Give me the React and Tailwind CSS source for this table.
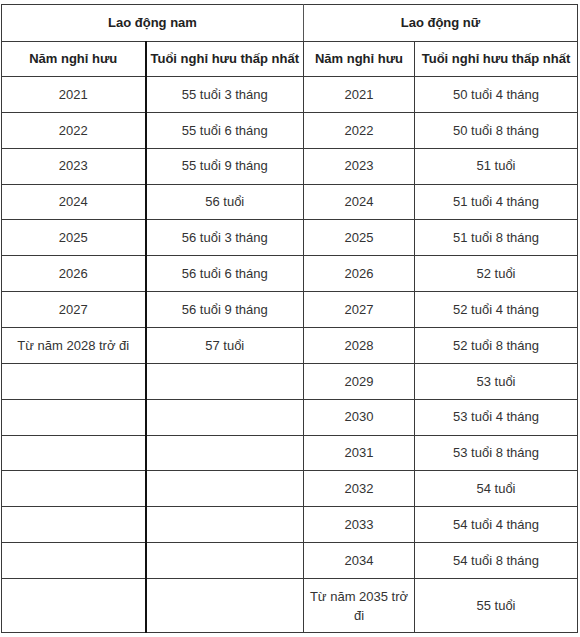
const rows = [
  ["2021", "55 tuổi 3 tháng", "2021", "50 tuổi 4 tháng"],
  ["2022", "55 tuổi 6 tháng", "2022", "50 tuổi 8 tháng"],
  ["2023", "55 tuổi 9 tháng", "2023", "51 tuổi"],
  ["2024", "56 tuổi", "2024", "51 tuổi 4 tháng"],
  ["2025", "56 tuổi 3 tháng", "2025", "51 tuổi 8 tháng"],
  ["2026", "56 tuổi 6 tháng", "2026", "52 tuổi"],
  ["2027", "56 tuổi 9 tháng", "2027", "52 tuổi 4 tháng"],
  ["Từ năm 2028 trở đi", "57 tuổi", "2028", "52 tuổi 8 tháng"],
  ["", "", "2029", "53 tuổi"],
  ["", "", "2030", "53 tuổi 4 tháng"],
  ["", "", "2031", "53 tuổi 8 tháng"],
  ["", "", "2032", "54 tuổi"],
  ["", "", "2033", "54 tuổi 4 tháng"],
  ["", "", "2034", "54 tuổi 8 tháng"],
];

const cell = "border border-[#3a3a3a] text-center align-middle px-1";

export default function App() {
  return (
    <div className="bg-white w-[580px] h-[637px] pt-[4px] pl-[1px] font-['Liberation_Sans',Arial,sans-serif] text-[13px] text-[#333]">
      <table className="table-fixed border-collapse w-[576px]">
        <colgroup>
          <col className="w-[144px]" />
          <col className="w-[158px]" />
          <col className="w-[111px]" />
          <col className="w-[163px]" />
        </colgroup>
        <thead>
          <tr className="h-[37px]">
            <th colSpan={2} className={`${cell} font-bold text-[#222] border-r-[#555]`}>
              Lao động nam
            </th>
            <th colSpan={2} className={`${cell} font-bold text-[#222]`}>
              Lao động nữ
            </th>
          </tr>
          <tr className="h-[35px]">
            <th className={`${cell} font-bold text-[#222] border-r-2 border-r-[#111]`}>Năm nghỉ hưu</th>
            <th className={`${cell} font-bold text-[#222] whitespace-nowrap px-0`}>Tuổi nghỉ hưu thấp nhất</th>
            <th className={`${cell} font-bold text-[#222]`}>Năm nghỉ hưu</th>
            <th className={`${cell} font-bold text-[#222] whitespace-nowrap px-0`}>Tuổi nghỉ hưu thấp nhất</th>
          </tr>
        </thead>
        <tbody>
          {rows.map((r, i) => (
            <tr key={i} className="h-[35.86px]">
              <td className={`${cell} border-r-2 border-r-[#111]`}>{r[0]}</td>
              <td className={cell}>{r[1]}</td>
              <td className={`${cell} border-l-[#666]`}>{r[2]}</td>
              <td className={`${cell} border-l-[#666]`}>{r[3]}</td>
            </tr>
          ))}
          <tr className="h-[54px]">
            <td className={`${cell} border-r-2 border-r-[#111]`}></td>
            <td className={cell}></td>
            <td className={`${cell} border-l-[#666] leading-[19px] px-[3px]`}>Từ năm 2035 trở đi</td>
            <td className={`${cell} border-l-[#666]`}>55 tuổi</td>
          </tr>
        </tbody>
      </table>
    </div>
  );
}
